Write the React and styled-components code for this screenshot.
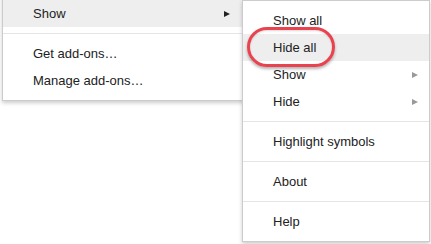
import React from 'react'
import styled, { createGlobalStyle } from 'styled-components'

const GlobalStyle = createGlobalStyle`
  html, body {
    margin: 0;
    background: #fff;
    overflow: hidden;
  }
  body {
    font-family: "Liberation Sans", Arial, sans-serif;
    font-size: 13px;
    color: #222;
  }
`

const Stage = styled.div`
  position: relative;
  display: flex;
  align-items: flex-start;
  width: 431px;
  height: 244px;
`

const Menu = styled.div`
  position: relative;
  box-sizing: border-box;
  width: ${p => p.$width}px;
  margin-top: ${p => p.$top || 0}px;
  margin-left: ${p => p.$left || 0}px;
  padding: 6px 0;
  background: #fff;
  border: 1px solid #ccc;
  box-shadow: 0 2px 4px rgba(0, 0, 0, 0.2);
  z-index: ${p => p.$z || 0};
`

const Item = styled.div`
  display: flex;
  align-items: center;
  justify-content: space-between;
  height: 27px;
  padding: 0 ${p => p.$right || 10}px 0 30px;
  background: ${p => (p.$active ? '#eee' : 'transparent')};
  white-space: nowrap;
`

const Arrow = styled.span`
  width: 0;
  height: 0;
  border-top: 3.5px solid transparent;
  border-bottom: 3.5px solid transparent;
  border-left: 6px solid ${p => (p.$dim ? '#999' : '#222')};
`

const Sep = styled.div`
  height: 1px;
  margin: 6px 0;
  background: #e5e5e5;
`

const Ring = styled.div`
  position: absolute;
  left: 247px;
  top: 27px;
  width: 88px;
  height: 40px;
  box-sizing: border-box;
  border: 3px solid #e8434f;
  border-radius: 20px;
  box-shadow: 0 2px 3px rgba(0, 0, 0, 0.3), inset 0 1px 2px rgba(0, 0, 0, 0.15);
  z-index: 2;
`

export default function App() {
  return (
    <Stage>
      <GlobalStyle />
      <Menu $width={242} $top={-7} $left={2}>
        <Item $active $right={13}>
          Show <Arrow />
        </Item>
        <Sep />
        <Item>Get add-ons…</Item>
        <Item>Manage add-ons…</Item>
      </Menu>
      <Menu $width={188} $left={-2} $z={1}>
        <Item>Show all</Item>
        <Item $active>Hide all</Item>
        <Item $right={11}>
          Show <Arrow $dim />
        </Item>
        <Item $right={11}>
          Hide <Arrow $dim />
        </Item>
        <Sep />
        <Item>Highlight symbols</Item>
        <Sep />
        <Item>About</Item>
        <Sep />
        <Item>Help</Item>
      </Menu>
      <Ring />
    </Stage>
  )
}
